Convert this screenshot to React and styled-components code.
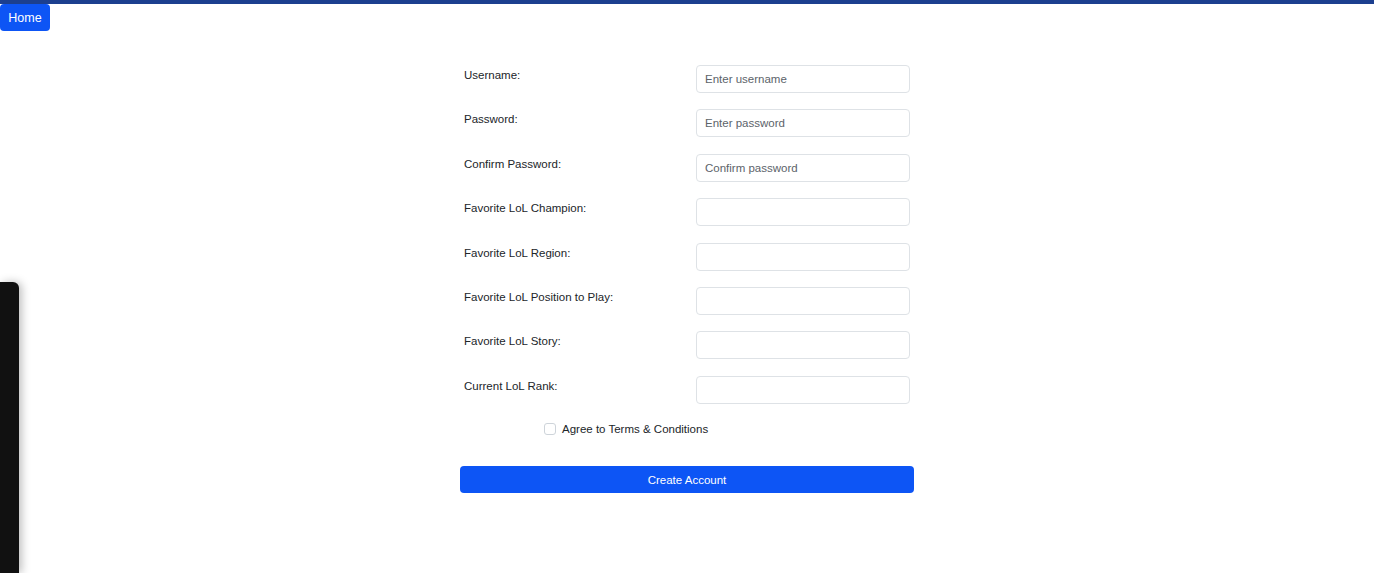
import React from 'react';
import styled, { createGlobalStyle } from 'styled-components';

const GlobalStyle = createGlobalStyle`
  html, body {
    margin: 0;
    padding: 0;
    background: #fff;
    font-family: "Liberation Sans", Arial, sans-serif;
    color: #212529;
  }
  * { box-sizing: border-box; }
`;

const TopBar = styled.div`
  height: 4px;
  background: #1c3f8f;
`;

const HomeButton = styled.button`
  display: block;
  height: 27px;
  width: 50px;
  margin: 0;
  padding: 0;
  border: none;
  border-radius: 4px;
  background: #0d55f5;
  color: #fff;
  font-family: inherit;
  font-size: 12.5px;
  cursor: pointer;
`;

const Form = styled.form`
  width: 454px;
  margin: 34px auto 0;
  display: flex;
  flex-direction: column;
`;

const Row = styled.div`
  display: grid;
  grid-template-columns: 232px 214px;
  padding: 0 4px;
  margin-bottom: 16.4px;
`;

const Label = styled.label`
  font-size: 11.5px;
  line-height: 18px;
  padding-top: 1px;
  color: #212529;
`;

const Input = styled.input`
  height: 28px;
  width: 214px;
  border: 1px solid #dee2e6;
  border-radius: 4px;
  padding: 0 8px;
  font-family: inherit;
  font-size: 11.5px;
  color: #212529;
  outline: none;
  &::placeholder {
    color: #5c636a;
  }
`;

const CheckRow = styled.div`
  display: flex;
  align-items: center;
  gap: 6px;
  padding-left: 84px;
  height: 18px;
  font-size: 11.5px;
`;

const Check = styled.span`
  width: 12px;
  height: 12px;
  border: 1px solid #ced4da;
  border-radius: 3px;
  background: #fff;
`;

const Submit = styled.button`
  margin-top: 28px;
  height: 27px;
  width: 454px;
  border: none;
  border-radius: 4px;
  background: #0d55f5;
  color: #fff;
  font-family: inherit;
  font-size: 11.5px;
  cursor: pointer;
`;

const SidePanel = styled.div`
  position: fixed;
  left: 0;
  top: 282px;
  bottom: 0;
  width: 19px;
  background: #111;
  border-top-right-radius: 6px;
  box-shadow: 3px 0 8px rgba(0, 0, 0, 0.25);
`;

const fields = [
  { label: 'Username:', placeholder: 'Enter username' },
  { label: 'Password:', placeholder: 'Enter password', type: 'password' },
  { label: 'Confirm Password:', placeholder: 'Confirm password', type: 'password' },
  { label: 'Favorite LoL Champion:' },
  { label: 'Favorite LoL Region:' },
  { label: 'Favorite LoL Position to Play:' },
  { label: 'Favorite LoL Story:' },
  { label: 'Current LoL Rank:' },
];

export default function App() {
  return (
    <>
      <GlobalStyle />
      <TopBar />
      <HomeButton>Home</HomeButton>
      <Form onSubmit={e => e.preventDefault()}>
        {fields.map(f => (
          <Row key={f.label}>
            <Label>{f.label}</Label>
            <Input type={f.type || 'text'} placeholder={f.placeholder || ''} />
          </Row>
        ))}
        <CheckRow>
          <Check />
          <span>Agree to Terms &amp; Conditions</span>
        </CheckRow>
        <Submit type="submit">Create Account</Submit>
      </Form>
      <SidePanel />
    </>
  );
}
